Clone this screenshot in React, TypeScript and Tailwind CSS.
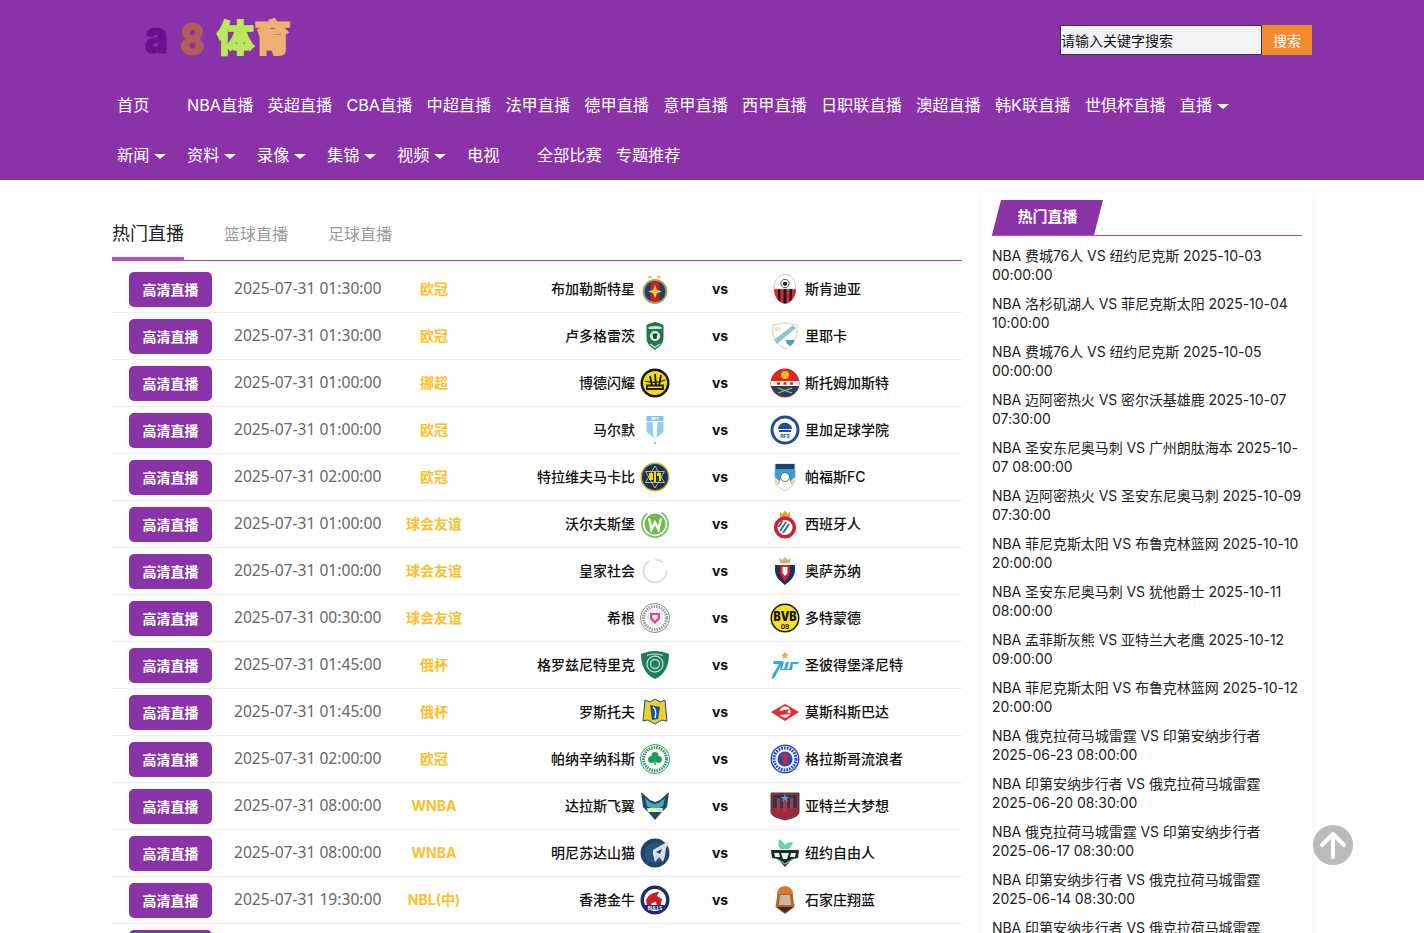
const fontStack = 'Inter, "Noto Sans CJK SC", sans-serif';

const Svg = ({ children }: { children: React.ReactNode }) => (
  <svg viewBox="0 0 30 30" className="h-[30px] w-[30px] shrink-0">
    {children}
  </svg>
);

const crests: Record<string, React.ReactNode> = {
  fcsb: (
    <>
      <path d="M10 1l1 1.500 1.500-.3-1 1.200.6 1.400-2.100-.7-2.100.7.6-1.400-1-1.200 1.500.3zM19 1l1 1.500 1.500-.3-1 1.200.6 1.400-2.100-.7-2.100.7.6-1.400-1-1.200 1.500.3z" fill="#d8c84a" />
      <circle cx="15" cy="17.500" r="12.500" fill="#b8a040" />
      <circle cx="15" cy="17.500" r="10.500" fill="#1d3a80" />
      <path d="M10.500 8h9v19h-9z" fill="#c8202a" />
      <path d="M15 10.500l1.800 5.200 5.200 1.800-5.200 1.800-1.800 5.200-1.800-5.200-5.200-1.800 5.200-1.800z" fill="#f4d020" />
    </>
  ),
  chikhura: (
    <>
      <ellipse cx="15" cy="15" rx="11" ry="14.500" fill="#c62f36" />
      <path d="M4 15C4 6 9 .500 15 .500S26 6 26 15z" fill="#fff" stroke="#b9b9b9" strokeWidth=".6" />
      <path d="M8 15h2.500v13L8 25zM13.500 15h3v14.400h-3zM19.500 15H22v10l-2.500 3z" fill="#2b1416" />
      <circle cx="15" cy="9.500" r="4.200" fill="#f0f0f0" stroke="#333" strokeWidth=".8" />
      <path d="M13.500 8h3l.8 2.500-2.300 1.500-2.300-1.500z" fill="#222" />
    </>
  ),
  ludogorets: (
    <>
      <path d="M15 1c3 .8 6 1.400 8.500 3v13c0 6-4.500 9-8.500 12-4-3-8.500-6-8.500-12V4C9 2.400 12 1.800 15 1z" fill="#1f7a4a" />
      <path d="M8.500 6c4-1.500 9-1.500 13 0v2h-13z" fill="#cfe5d8" />
      <circle cx="15" cy="15" r="5" fill="#e8efe9" />
      <path d="M12.500 12.500h5l-1 5.500h-3z" fill="#1b4a30" />
      <path d="M10 23l5 3.500 5-3.500" fill="none" stroke="#d6e8dc" strokeWidth="1.200" />
    </>
  ),
  rijeka: (
    <>
      <path d="M3 4l12-2 12 2c1 9 0 17-12 24C3 21 2 13 3 4z" fill="#fff" stroke="#e0d9ad" strokeWidth="1.200" />
      <path d="M4 19L23 4l3 3L7 23z" fill="#8fc3d6" />
      <path d="M15.500 19h9c-.5 3-2.500 5-4.500 6-2-1-4-3-4.500-6z" fill="#5a9cb8" />
      <path d="M5 6h6v4H5z" fill="#f2e8be" />
    </>
  ),
  bodo: (
    <>
      <circle cx="15" cy="15" r="14.500" fill="#161616" />
      <circle cx="15" cy="15" r="12" fill="#f4d90f" />
      <path d="M7 17.500h16v3.500H7zM10 8l2 10M15 6l1 12M21 7l-2 11" stroke="#1a1a1a" strokeWidth="1.800" fill="none" />
      <path d="M5 13c5 2 14 2 20-1" stroke="#1a1a1a" strokeWidth="1.300" fill="none" />
    </>
  ),
  stromsgodset: (
    <>
      <circle cx="15" cy="15" r="14.500" fill="#d62b22" />
      <path d="M1 13h28v5H1z" fill="#f6f0e0" />
      <path d="M1 18h28a14.500 14.500 0 01-28 0z" fill="#18436c" />
      <circle cx="15" cy="7" r="4" fill="#f2b62c" />
      <path d="M7 15.500h3M13.500 15.500h3M20 15.500h3" stroke="#d62b22" strokeWidth="2.500" />
      <path d="M8 25l14-5M22 25L8 20" stroke="#d9b93c" strokeWidth="1.200" />
    </>
  ),
  malmo: (
    <>
      <path d="M6.500 1h17v5h-17z" fill="#7cc4ec" />
      <path d="M6.500 7h17v10l-8.500 7-8.500-7z" fill="#8ed0f2" />
      <path d="M12.500 7h5l-1 16h-3z" fill="#fff" />
      <text x="15" y="5" textAnchor="middle" fontSize="3.600" fontWeight="700" fill="#fff">MFF</text>
      <circle cx="15" cy="28" r="1" fill="#5cb0e0" />
    </>
  ),
  riga: (
    <>
      <circle cx="15" cy="15" r="14.500" fill="#1d4f9c" />
      <circle cx="15" cy="15" r="11.500" fill="#fff" />
      <path d="M8 13c1-4 5-6 9-5 3 1 5 3 5 6H8z" fill="#1d4f9c" />
      <path d="M9 15h12v2H9z" fill="#1d4f9c" />
      <text x="15" y="23" textAnchor="middle" fontSize="5" fontWeight="700" fill="#1d4f9c">RFS</text>
    </>
  ),
  maccabi: (
    <>
      <circle cx="15" cy="15" r="14.500" fill="#c8b21e" />
      <circle cx="15" cy="15" r="13" fill="#15306e" />
      <path d="M15 4l9.500 16.500h-19zM15 26L5.500 9.500h19z" fill="none" stroke="#d8c020" strokeWidth="1" />
      <path d="M9 11h4v7h-4zM14 9h2v11h-2zM17 11h4v8h-2v-5h-2z" fill="#f1d820" />
    </>
  ),
  pafos: (
    <>
      <path d="M5 2h20v16c0 5-5 8-10 11C10 26 5 23 5 18z" fill="#fff" stroke="#b8c4d0" strokeWidth=".8" />
      <path d="M5 7h20v8l-5 5-1-7h-8l-1 7-5-5z" fill="#3e9ad6" />
      <path d="M5.500 2h19v5h-19z" fill="#17406c" />
      <circle cx="15" cy="15" r="4.500" fill="#fff" stroke="#333" strokeWidth=".7" />
      <path d="M5 17l5 4-2 2zM25 17l-5 4 2 2z" fill="#f2c62c" />
    </>
  ),
  wolfsburg: (
    <>
      <circle cx="15" cy="15" r="13" fill="#fff" stroke="#7cc060" strokeWidth="1.800" strokeDasharray="66 16" transform="rotate(-60 15 15)" />
      <circle cx="15" cy="15" r="10.500" fill="#72b94e" />
      <path d="M9 9.500l2.500 11 3.500-7 3.500 7 2.500-11" fill="none" stroke="#fff" strokeWidth="2.400" />
    </>
  ),
  espanyol: (
    <>
      <path d="M10 8V3l2.500 2L15 1.500 17.500 5 20 3v5z" fill="#e8a020" />
      <circle cx="15" cy="18.500" r="11" fill="#c9242c" />
      <circle cx="15" cy="18.500" r="7.500" fill="#fff" />
      <path d="M10 22l6-9M13 24l6-9M8.500 18l4-6" stroke="#2a62ad" strokeWidth="1.800" />
    </>
  ),
  spinner: (
    <circle cx="15" cy="15" r="11.500" fill="none" stroke="#d8d8d8" strokeWidth="1.600" strokeDasharray="48 6 8 10" />
  ),
  osasuna: (
    <>
      <path d="M10 7l-1-5 3 2L15 1l3 3 3-2-1 5z" fill="#cdb27a" />
      <path d="M5 9h20v5c0 7-5 11-10 15C10 25 5 21 5 14z" fill="#16335c" />
      <path d="M10 9h10v9l-5 8-5-8z" fill="#d0202c" />
      <path d="M12.500 11h5v6L15 20l-2.500-3z" fill="#fff" />
    </>
  ),
  hacken: (
    <>
      <circle cx="15" cy="15" r="14.500" fill="#fff" stroke="#8a8a8a" strokeWidth="1" />
      <circle cx="15" cy="15" r="11.500" fill="none" stroke="#9a9a9a" strokeWidth="3" strokeDasharray="1.500 1" />
      <circle cx="15" cy="15" r="8.500" fill="#fbeef2" />
      <path d="M10 10h10v6l-5 5-5-5z" fill="#e24a7a" />
      <path d="M12.500 12h5v3l-2.500 2.500L12.500 15z" fill="#fff" />
    </>
  ),
  dortmund: (
    <>
      <circle cx="15" cy="15" r="14.500" fill="#161616" />
      <circle cx="15" cy="15" r="13" fill="#f8e11a" />
      <text x="15" y="17.500" textAnchor="middle" fontSize="12.500" fontWeight="900" textLength="23" lengthAdjust="spacingAndGlyphs" fill="#111">BVB</text>
      <text x="15" y="25.500" textAnchor="middle" fontSize="6.500" fontWeight="700" fill="#111">09</text>
    </>
  ),
  akhmat: (
    <>
      <path d="M1 4c9-4 19-4 28 0 0 10-3 20-14 25C4 24 1 14 1 4z" fill="#1e7d5c" />
      <circle cx="15" cy="14" r="8" fill="none" stroke="#b6dcca" strokeWidth="1.300" />
      <circle cx="15" cy="14" r="4.500" fill="none" stroke="#b6dcca" strokeWidth="1.300" />
      <path d="M7 5.500c5-2 11-2 16 0" fill="none" stroke="#d6ece2" strokeWidth="1" />
    </>
  ),
  zenit: (
    <>
      <path d="M15 1l1.200 3 3 .2-2.300 1.900.8 2.900-2.700-1.600-2.700 1.600.8-2.900-2.300-1.900 3-.2z" fill="#d6b45a" />
      <path d="M4 11h9l-8 16-3 2c-1-1 0-3 1-5l6-10H3z" fill="#35a8e0" />
      <path d="M11 12h3l-2 7h2l2-7h3l-2 7h2l2-7h8l-1 2h-5l-1 6H10z" fill="#35a8e0" />
    </>
  ),
  rostov: (
    <>
      <path d="M5 3l5 2 5-3 5 3 5-2 2 21-5-1-7 4-7-4-5 1z" fill="#f1cf2a" stroke="#214a96" strokeWidth="1" />
      <path d="M10 8l10 2-2 12-6 1z" fill="#1d4f9c" />
      <path d="M13 10c3 2 3 7 2 11" stroke="#fff" strokeWidth="1.400" fill="none" />
    </>
  ),
  spartak: (
    <>
      <path d="M1 15L15 7l14 8-14 9z" fill="#e12d36" />
      <circle cx="15" cy="15" r="5.500" fill="#fff" />
      <path d="M5 15l15-3-3 3 4 2-10 1z" fill="#e12d36" />
      <path d="M11 4h.8M14.600 3.500h.8M18 4h.8" stroke="#c9b27a" strokeWidth="1" />
    </>
  ),
  panathinaikos: (
    <>
      <circle cx="15" cy="15" r="14.500" fill="#fff" stroke="#2a9a60" strokeWidth="1" />
      <circle cx="15" cy="15" r="11.500" fill="none" stroke="#2a9a60" strokeWidth="3" strokeDasharray="1.500 1" />
      <circle cx="15" cy="11.500" r="3.400" fill="#1f9a58" />
      <circle cx="11.500" cy="15.500" r="3.400" fill="#1f9a58" />
      <circle cx="18.500" cy="15.500" r="3.400" fill="#1f9a58" />
      <path d="M15 15v6" stroke="#1f9a58" strokeWidth="1.500" />
    </>
  ),
  rangers: (
    <>
      <circle cx="15" cy="15" r="14.500" fill="#2b52b8" />
      <circle cx="15" cy="15" r="13" fill="#f3f5fb" />
      <circle cx="15" cy="15" r="11" fill="none" stroke="#2b52b8" strokeWidth="3" strokeDasharray="1.800 1" />
      <circle cx="15" cy="15" r="7.500" fill="#2a49a8" />
      <path d="M12 10l5-1 1 5-1 6h-4l1-5-3-2z" fill="#d42530" />
    </>
  ),
  dallas: (
    <>
      <path d="M1 1l9 8 5 2 5-2 9-8-2 15-6 6-6 7-6-7-6-6z" fill="#1b4a6e" />
      <path d="M5 7l6 5 4 1 4-1 6-5-2 8-4 2H11l-4-2z" fill="#4fa8a0" />
      <path d="M7 17h16l-2 4H9z" fill="#a9c542" />
      <text x="15" y="20.500" textAnchor="middle" fontSize="4.500" fontWeight="800" fill="#fff">WINGS</text>
    </>
  ),
  atlanta: (
    <>
      <path d="M1 2h28v19c0 4-6 6-14 8-8-2-14-4-14-8z" fill="#9a2b3c" stroke="#444" strokeWidth="1" />
      <path d="M3 4h24v13H3z" fill="#2f3b44" />
      <path d="M7 7h3v11H7zM20 7h3v11h-3zM13 10h4v11h-4z" fill="#b03346" />
      <path d="M15 3l1.200 3h3l-2.400 2 1 3-2.800-2-2.800 2 1-3L10.800 6h3z" fill="#5d9ad6" />
    </>
  ),
  lynx: (
    <>
      <circle cx="15" cy="15" r="14.500" fill="#1e4468" />
      <circle cx="15" cy="15" r="10.500" fill="#27567c" />
      <path d="M13 12l12-7 4-1-3 6-1 8-2 6-4-5-4 5-2-8z" fill="#d7dee3" />
      <path d="M16 14l6-3-2 5z" fill="#1e4468" />
    </>
  ),
  liberty: (
    <>
      <path d="M9 1c3 2 4 3 6 6 2-3 5-3 8-3-1 3-2 5-4 7h-9C8 8 8 4 9 1z" fill="#6fd0ae" />
      <path d="M1 12h28l-1 8-6 1-7 8-7-8-6-1z" fill="#1c2a28" />
      <path d="M4 15l5 0 1 4H5zM26 15h-5l-1 4h5zM11 15h8l-2 6h-4z" fill="#e8f2ee" />
      <path d="M7 21l8 5 8-5" fill="none" stroke="#62c7a4" strokeWidth="1.200" />
    </>
  ),
  golden: (
    <>
      <circle cx="15" cy="15" r="14.500" fill="#1c2d6a" />
      <circle cx="15" cy="15" r="11" fill="#fff" />
      <path d="M6 15c3-6 8-8 13-8l-2 4 5 3-2 9-3-1-1-5-4 1-2 5-3-1z" fill="#c8202a" />
      <path d="M4 20h22l-3 5H7z" fill="#1c2d6a" />
      <text x="15" y="25" textAnchor="middle" fontSize="4.500" fontWeight="700" fill="#fff">BULLS</text>
    </>
  ),
  shijiazhuang: (
    <>
      <circle cx="15" cy="9" r="8" fill="#d87a2c" />
      <path d="M7.500 9h15l2 13-9.500 7-9.500-7z" fill="#b2622a" />
      <path d="M10 10h10l1 10H9z" fill="#c7b69a" />
      <path d="M7 22h16l-8 6z" fill="#3a2a20" />
    </>
  ),
};

const matches = [
  { time: '2025-07-31 01:30:00', comp: '欧冠', home: '布加勒斯特星', hk: 'fcsb', away: '斯肯迪亚', ak: 'chikhura' },
  { time: '2025-07-31 01:30:00', comp: '欧冠', home: '卢多格雷茨', hk: 'ludogorets', away: '里耶卡', ak: 'rijeka' },
  { time: '2025-07-31 01:00:00', comp: '挪超', home: '博德闪耀', hk: 'bodo', away: '斯托姆加斯特', ak: 'stromsgodset' },
  { time: '2025-07-31 01:00:00', comp: '欧冠', home: '马尔默', hk: 'malmo', away: '里加足球学院', ak: 'riga' },
  { time: '2025-07-31 02:00:00', comp: '欧冠', home: '特拉维夫马卡比', hk: 'maccabi', away: '帕福斯FC', ak: 'pafos' },
  { time: '2025-07-31 01:00:00', comp: '球会友谊', home: '沃尔夫斯堡', hk: 'wolfsburg', away: '西班牙人', ak: 'espanyol' },
  { time: '2025-07-31 01:00:00', comp: '球会友谊', home: '皇家社会', hk: 'spinner', away: '奥萨苏纳', ak: 'osasuna' },
  { time: '2025-07-31 00:30:00', comp: '球会友谊', home: '希根', hk: 'hacken', away: '多特蒙德', ak: 'dortmund' },
  { time: '2025-07-31 01:45:00', comp: '俄杯', home: '格罗兹尼特里克', hk: 'akhmat', away: '圣彼得堡泽尼特', ak: 'zenit' },
  { time: '2025-07-31 01:45:00', comp: '俄杯', home: '罗斯托夫', hk: 'rostov', away: '莫斯科斯巴达', ak: 'spartak' },
  { time: '2025-07-31 02:00:00', comp: '欧冠', home: '帕纳辛纳科斯', hk: 'panathinaikos', away: '格拉斯哥流浪者', ak: 'rangers' },
  { time: '2025-07-31 08:00:00', comp: 'WNBA', home: '达拉斯飞翼', hk: 'dallas', away: '亚特兰大梦想', ak: 'atlanta' },
  { time: '2025-07-31 08:00:00', comp: 'WNBA', home: '明尼苏达山猫', hk: 'lynx', away: '纽约自由人', ak: 'liberty' },
  { time: '2025-07-31 19:30:00', comp: 'NBL(中)', home: '香港金牛', hk: 'golden', away: '石家庄翔蓝', ak: 'shijiazhuang' },
  { time: '2025-07-31 19:30:00', comp: 'NBL(中)', home: '安徽文一', hk: 'spinner', away: '广西威壮', ak: 'spinner' },
];

const hotList = [
  'NBA 费城76人 VS 纽约尼克斯 2025-10-03 00:00:00',
  'NBA 洛杉矶湖人 VS 菲尼克斯太阳 2025-10-04 10:00:00',
  'NBA 费城76人 VS 纽约尼克斯 2025-10-05 00:00:00',
  'NBA 迈阿密热火 VS 密尔沃基雄鹿 2025-10-07 07:30:00',
  'NBA 圣安东尼奥马刺 VS 广州朗肽海本 2025-10-07 08:00:00',
  'NBA 迈阿密热火 VS 圣安东尼奥马刺 2025-10-09 07:30:00',
  'NBA 菲尼克斯太阳 VS 布鲁克林篮网 2025-10-10 20:00:00',
  'NBA 圣安东尼奥马刺 VS 犹他爵士 2025-10-11 08:00:00',
  'NBA 孟菲斯灰熊 VS 亚特兰大老鹰 2025-10-12 09:00:00',
  'NBA 菲尼克斯太阳 VS 布鲁克林篮网 2025-10-12 20:00:00',
  'NBA 俄克拉荷马城雷霆 VS 印第安纳步行者 2025-06-23 08:00:00',
  'NBA 印第安纳步行者 VS 俄克拉荷马城雷霆 2025-06-20 08:30:00',
  'NBA 俄克拉荷马城雷霆 VS 印第安纳步行者 2025-06-17 08:30:00',
  'NBA 印第安纳步行者 VS 俄克拉荷马城雷霆 2025-06-14 08:30:00',
  'NBA 印第安纳步行者 VS 俄克拉荷马城雷霆 2025-06-12 08:30:00',
];

const navRow1 = ['NBA直播', '英超直播', 'CBA直播', '中超直播', '法甲直播', '德甲直播', '意甲直播', '西甲直播', '日职联直播', '澳超直播', '韩K联直播', '世俱杯直播'];
const navRow2 = ['新闻', '资料', '录像', '集锦', '视频'];

const Caret = () => (
  <span className="ml-[5px] mt-[3px] inline-block h-0 w-0 border-x-[6px] border-t-[5px] border-x-transparent border-t-white" />
);

const MatchRow = ({ m }: { m: (typeof matches)[number] }) => (
  <div className="flex h-[47px] shrink-0 items-center border-b border-[#eeeeee] pl-[17px]">
    <div className="flex h-[35px] w-[83px] items-center justify-center rounded-[5px] bg-[#8a33a8] text-[14px] font-bold text-white">
      高清直播
    </div>
    <div className="ml-[22px] w-[150px] whitespace-nowrap font-['Noto_Sans',sans-serif] text-[15.600px] text-[#666666]">{m.time}</div>
    <div className="mb-[2px] w-[100px] text-center text-[14px] font-bold text-[#fbc02d]">{m.comp}</div>
    <div className="mb-[2px] w-[151px] text-right text-[14px] font-medium text-[#111111]">{m.home}</div>
    <div className="ml-[5px] w-[30px]">
      <Svg>{crests[m.hk]}</Svg>
    </div>
    <div className="mb-[2px] w-[100px] text-center text-[14px] font-bold text-[#111111]">vs</div>
    <div className="w-[30px]">
      <Svg>{crests[m.ak]}</Svg>
    </div>
    <div className="mb-[2px] ml-[5px] text-[14px] font-medium text-[#111111]">{m.away}</div>
  </div>
);

export default function App() {
  return (
    <div className="relative h-[933px] overflow-hidden bg-white" style={{ fontFamily: fontStack }}>
      <header className="h-[180px] bg-[#8a33a8]">
        <div className="mx-auto w-[1200px] text-white">
          <div className="flex h-[80px] items-start justify-between">
            <div className="ml-[33px] mt-[13px] flex h-[50px] items-center font-black leading-none">
              <span className="mt-[4px] w-[24px] origin-bottom scale-y-[1.2] text-[38px] text-[#6a0f8e] [-webkit-text-stroke:1px_#6a0f8e]">a</span>
              <span className="ml-[11px] mt-[2px] w-[24px] origin-left scale-x-[0.82] text-[44px] text-[#b05c5a] [-webkit-text-stroke:1px_#b05c5a]">8</span>
              <span className="ml-[13px] text-[37px] text-[#bce95c] [-webkit-text-stroke:1.5px_#bce95c]">体</span>
              <span className="text-[37px] text-[#efb16f] [-webkit-text-stroke:1.5px_#efb16f]">育</span>
            </div>
            <div className="mt-[25px] flex h-[30px]">
              <div className="flex h-[30px] w-[202px] items-center border border-[#3c2a4a] bg-[#f2f3f5] pt-[1px] text-[14px] text-[#111111]">
                请输入关键字搜索
              </div>
              <div className="flex h-[30px] w-[50px] items-center justify-center bg-[#f38a2e] text-[14px] text-white">
                搜索
              </div>
            </div>
          </div>
          <nav className="flex h-[50px] items-center pl-[5px] text-[16.200px]">
            <a className="w-[70px]">首页</a>
            {navRow1.map((item) => (
              <a key={item} className="mr-[14.150px] whitespace-nowrap">
                {item}
              </a>
            ))}
            <a className="flex items-center">
              直播
              <Caret />
            </a>
          </nav>
          <nav className="flex h-[50px] items-center pl-[5px] text-[16.200px]">
            {navRow2.map((item) => (
              <a key={item} className="flex w-[70px] items-center">
                {item}
                <Caret />
              </a>
            ))}
            <a className="w-[70px]">电视</a>
            <a className="mr-[14px]">全部比赛</a>
            <a>专题推荐</a>
          </nav>
        </div>
      </header>

      <main className="mx-auto flex w-[1200px] items-start">
        <section className="w-[850px] pt-[40px]">
          <div className="flex h-[41px] items-start border-b border-[#a84fc8]">
            <div className="h-[40px] border-b-[3px] border-[#b04fd0] pt-[1px] text-[18px] leading-[26px] text-[#222222]">
              热门直播
            </div>
            <div className="ml-[40px] mt-[1px] text-[16px] leading-[26px] text-[#999999]">篮球直播</div>
            <div className="ml-[40px] mt-[1px] text-[16px] leading-[26px] text-[#999999]">足球直播</div>
          </div>
          <div className="mt-[5px] flex flex-col">
            {matches.map((m, i) => (
              <MatchRow key={i} m={m} />
            ))}
          </div>
        </section>

        <aside className="ml-[20px] mt-[12px] w-[330px] bg-white px-[10px] pt-[8px] shadow-[0_0_8px_rgba(0,0,0,0.06)]">
          <div className="border-b border-[#a84fc8]">
            <div className="flex h-[35px] w-[111px] items-center justify-center bg-[#8a33a8] text-[15px] font-bold text-white [clip-path:polygon(9px_0,100%_0,calc(100%-9px)_100%,0_100%)]">
              热门直播
            </div>
          </div>
          <ul className="mt-[10px] flex flex-col gap-[10px]">
            {hotList.map((item, i) => (
              <li key={i} className="text-[14px] leading-[19px] tracking-[-0.060px] text-[#222222]">
                {item}
              </li>
            ))}
          </ul>
        </aside>
      </main>

      <div className="absolute left-[1313px] top-[825px] flex h-[40px] w-[40px] items-center justify-center rounded-full bg-[#bbbbbb]">
        <svg viewBox="0 0 40 40" className="h-[40px] w-[40px]" fill="none" stroke="#fff" strokeWidth="4" strokeLinecap="round" strokeLinejoin="round">
          <path d="M20 32V9M9 20L20 9l11 11" />
        </svg>
      </div>
    </div>
  );
}
